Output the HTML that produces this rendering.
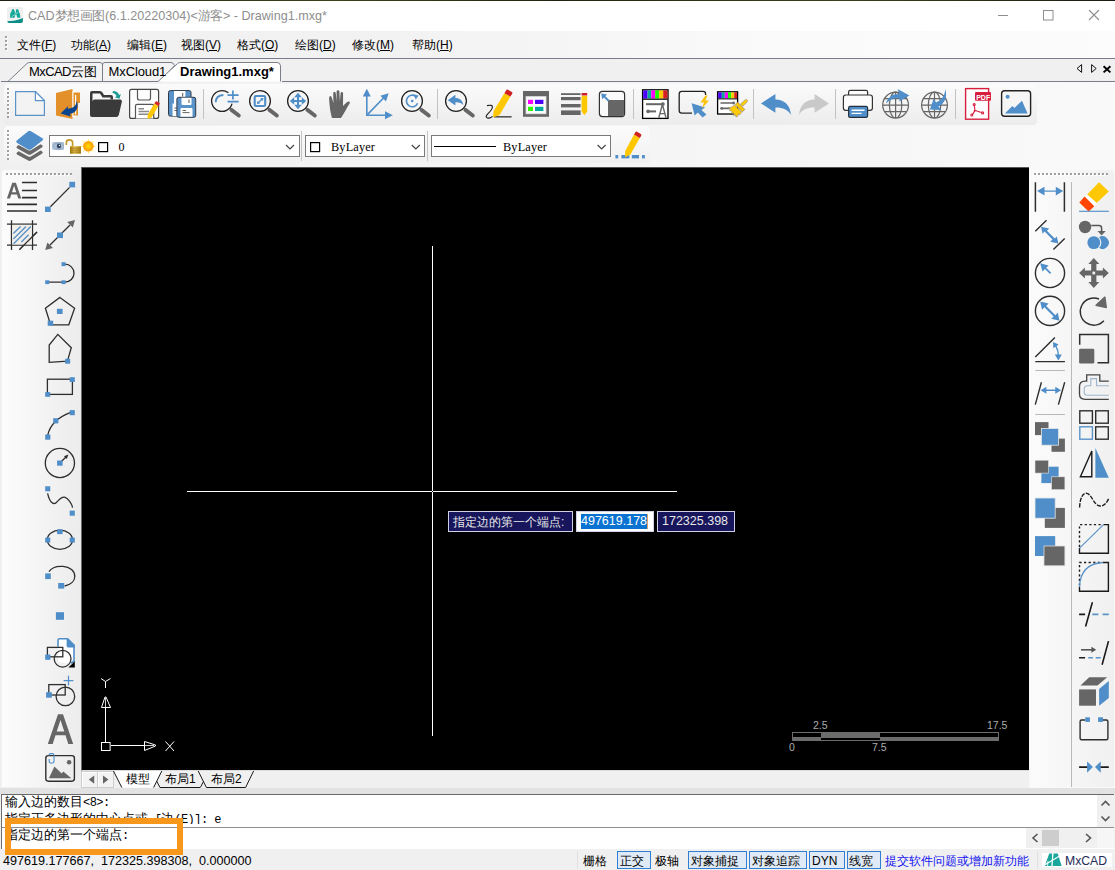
<!DOCTYPE html>
<html lang="zh">
<head>
<meta charset="utf-8">
<title>CAD</title>
<style>
*{box-sizing:border-box;margin:0;padding:0}
html,body{width:1115px;height:870px;overflow:hidden;background:#f0f0f0}
body{position:relative;font-family:"Liberation Sans",sans-serif;font-size:12px;color:#000}
.a{position:absolute}
.t{position:absolute;white-space:nowrap;line-height:1}
svg{position:absolute;overflow:visible}
.c{display:inline-block;width:1em;text-align:center}
u{text-decoration:underline;text-underline-offset:1px}
.grv{position:absolute;width:3px;background:repeating-linear-gradient(to bottom,#a0a0a0 0 2px,transparent 2px 4px) 0 0/2px 100% no-repeat,repeating-linear-gradient(to bottom,#fff 0 2px,transparent 2px 4px) 1px 1px/2px 100% no-repeat}
.grh{position:absolute;height:3px;background:repeating-linear-gradient(to right,#a0a0a0 0 2px,transparent 2px 4px) 0 0/100% 2px no-repeat,repeating-linear-gradient(to right,#fff 0 2px,transparent 2px 4px) 1px 1px/100% 2px no-repeat}
.sep{position:absolute;width:1px;background:#c4c4c4}
.combo{position:absolute;background:#fff;border:1px solid #7a7a7a}
.sb{position:absolute;border:1px solid #2f7fd5;background:#dfeaf6;height:18px;top:851px}
.mono{font-family:"Liberation Mono",monospace;font-size:12px;letter-spacing:-0.55px}
</style>
</head>
<body>
<!-- desktop strip -->
<div class="a" style="left:0;top:0;width:1115px;height:1px;background:linear-gradient(90deg,#1c2010,#3a4418 30%,#20240f 50%,#39421a 75%,#1a1d10)"></div>
<!-- title bar -->
<div class="a" style="left:0;top:1px;width:1115px;height:30px;background:#fff"></div>
<div class="t" id="title" style="left:28px;top:10px;font-size:12.6px;color:#8e8e8e;letter-spacing:0">CAD<span class="c">梦</span><span class="c">想</span><span class="c">画</span><span class="c">图</span>(6.1.20220304)&lt;<span class="c">游</span><span class="c">客</span>&gt; - Drawing1.mxg*</div>
<!-- menu bar -->
<div class="a" style="left:0;top:31px;width:1115px;height:27px;background:linear-gradient(90deg,#f0f0f0 0%,#f2f2f2 35%,#f9f9f9 65%,#fcfcfc 100%)"></div>
<div class="grv" style="left:5px;top:36px;height:16px"></div>
<div class="t m" style="left:17px;top:39px;font-size:12px"><span class="c">文</span><span class="c">件</span>(<u>F</u>)</div>
<div class="t m" style="left:71px;top:39px;font-size:12px"><span class="c">功</span><span class="c">能</span>(<u>A</u>)</div>
<div class="t m" style="left:127px;top:39px;font-size:12px"><span class="c">编</span><span class="c">辑</span>(<u>E</u>)</div>
<div class="t m" style="left:181px;top:39px;font-size:12px"><span class="c">视</span><span class="c">图</span>(<u>V</u>)</div>
<div class="t m" style="left:237px;top:39px;font-size:12px"><span class="c">格</span><span class="c">式</span>(<u>O</u>)</div>
<div class="t m" style="left:295px;top:39px;font-size:12px"><span class="c">绘</span><span class="c">图</span>(<u>D</u>)</div>
<div class="t m" style="left:352px;top:39px;font-size:12px"><span class="c">修</span><span class="c">改</span>(<u>M</u>)</div>
<div class="t m" style="left:412px;top:39px;font-size:12px"><span class="c">帮</span><span class="c">助</span>(<u>H</u>)</div>
<div class="a" style="left:0;top:58px;width:1115px;height:1px;background:#797d8b"></div>
<!-- tab bar -->
<svg style="left:0;top:59px" width="1115" height="25" viewBox="0 0 1115 25">
  <path d="M282 22.5 H1115" stroke="#797d8b" fill="none"/>
  <path d="M8 22.5 L27 4.5 Q28 3.5 30 3.5 H100 Q102.5 3.5 102.5 6 V22.5" fill="#f3f3f3" stroke="#7b8087" stroke-width="1"/>
  <path d="M102.5 22.5 V6 Q102.5 3.5 105 3.5 H171 Q173.5 3.5 174.5 6.5 L160 22.5" fill="#f3f3f3" stroke="#7b8087" stroke-width="1"/>
  <path d="M158 22.5 L177.5 4.6 Q178.6 3.5 180.5 3.5 H277 Q280.5 3.5 280.5 7 V22.5" fill="#fff" stroke="#7b8087" stroke-width="1"/>
  <path d="M1 22.5 H158" stroke="#797d8b" fill="none"/>
</svg>
<div class="t" style="left:29px;top:65px;font-size:13px;letter-spacing:-0.6px">MxCAD<span class="c">云</span><span class="c">图</span></div>
<div class="t" style="left:108.5px;top:65px;font-size:13px;letter-spacing:-0.1px">MxCloud1</div>
<div class="t" style="left:180px;top:65px;font-size:13px;font-weight:bold">Drawing1.mxg*</div>
<!-- title icon -->
<svg style="left:6px;top:6px" width="18" height="18" viewBox="6 6 18 18">
  <rect x="7" y="7" width="16" height="16" rx="1.8" fill="#f0f0f0"/>
  <path d="M10 17.6 Q10 12.6 11.4 11.8 Q11.6 9.2 13 9 Q14.6 9 14.8 12.6 L15.8 13.2 Q15.6 9.2 17 9 Q18.8 9.2 19 12 Q20.4 14 20.4 17.6 Q18.8 18 17.2 17.6 L16.4 14.6 L14.8 15.6 L14.8 17.6 Q12.4 18 10 17.6 Z" fill="#14a89a"/>
  <path d="M11.6 16.8 L17.8 12.4" stroke="#e8f4f2" stroke-width="0.6"/>
  <path d="M7.4 21 Q16 21 22.9 17.8 V21.2 Q22.9 23 21.2 23 H9 Q7.4 23 7.4 21 Z" fill="#0e8f86"/>
  <path d="M7.4 20.6 Q16 20.4 22.6 17.6" stroke="#fff" stroke-width="0.7" fill="none"/>
</svg>
<!-- window controls -->
<svg style="left:990px;top:5px" width="120" height="22" viewBox="990 5 120 22" fill="none" stroke="#8e8e8e" stroke-width="1">
  <path d="M998 15.5 H1008"/>
  <rect x="1043.5" y="10.5" width="9.5" height="9.5"/>
  <path d="M1089 10 L1099 20 M1099 10 L1089 20" stroke-width="1.1"/>
</svg>
<!-- tab bar arrows -->
<svg style="left:1070px;top:60px" width="45" height="20" viewBox="1070 60 45 20">
  <path d="M1081.6 64.6 V72.4 L1077 68.5 Z" fill="none" stroke="#111" stroke-width="1"/>
  <path d="M1091.6 64.6 V72.4 L1096.2 68.5 Z" fill="none" stroke="#111" stroke-width="1"/>
  <path d="M1103.6 66.2 L1110.4 72.4 M1110.4 66.2 L1103.6 72.4" stroke="#000" stroke-width="1.9"/>
</svg>
<!-- dock gradient -->
<div class="a" style="left:0;top:82px;width:1115px;height:706px;background:linear-gradient(90deg,#f0f0f0 0%,#f2f2f2 30%,#f6f6f6 65%,#f9f9f9 100%)"></div>
<!-- toolbar row 1 bg -->
<div class="a" style="left:4px;top:84px;width:1033px;height:41px;border-radius:4px;background:linear-gradient(#fbfbfb,#ececec)"></div>
<div class="grv" style="left:7px;top:88px;height:30px"></div>
<!-- toolbar row 2 bg -->
<div class="a" style="left:4px;top:126px;width:646px;height:37px;border-radius:4px;background:linear-gradient(#fbfbfb,#f1f1f1)"></div>
<div class="grv" style="left:7px;top:130px;height:30px"></div>
<!-- left toolbar bg -->
<div class="a" style="left:2px;top:170px;width:79px;height:617px;border-radius:4px 0 0 0;background:linear-gradient(90deg,#fcfcfc,#ececec)"></div>
<div class="grh" style="left:6px;top:173px;width:66px"></div>
<!-- right toolbar bg -->
<div class="a" style="left:1031px;top:170px;width:83px;height:617px;border-radius:3px 4px 0 0;background:linear-gradient(90deg,#fbfbfb,#f0f0f0)"></div>
<div class="grh" style="left:1034px;top:173px;width:74px"></div>
<div class="a" style="left:1071px;top:182px;width:1px;height:605px;background:#b9b9b9"></div>
<!-- canvas -->
<div class="a" style="left:81px;top:167px;width:947.5px;height:604px;background:#000;border:1px solid #6a6a6a;border-right:0;border-top-color:#555;border-bottom-color:#dcdcdc"></div>
<!-- crosshair -->
<div class="a" style="left:432px;top:246px;width:1px;height:490px;background:#fff"></div>
<div class="a" style="left:187px;top:491px;width:490px;height:1px;background:#fff"></div>
<div class="a" style="left:432px;top:491px;width:1px;height:1px;background:#000"></div>
<!-- dyn input -->
<div class="a" style="left:448px;top:511px;width:125px;height:21px;background:#17155c;border:1px solid #cfcfe6"></div>
<div class="t" style="left:453px;top:516px;font-size:12px;color:#e6e6e6"><span class="c">指</span><span class="c">定</span><span class="c">边</span><span class="c">的</span><span class="c">第</span><span class="c">一</span><span class="c">个</span><span class="c">端</span><span class="c">点</span>:</div>
<div class="a" style="left:576px;top:511px;width:78px;height:21px;background:#fff;border:1px solid #cfcfe6"></div>
<div class="a" style="left:581px;top:514px;width:66px;height:15px;background:#0a73d1"></div>
<div class="a" style="left:647px;top:514px;width:1px;height:15px;background:#e0a060"></div>
<div class="t" style="left:581px;top:515px;font-size:12.5px;color:#fff">497619.178</div>
<div class="a" style="left:657px;top:511px;width:78px;height:21px;background:#17155c;border:1px solid #cfcfe6"></div>
<div class="t" style="left:662px;top:515px;font-size:12.5px;color:#e6e6e6">172325.398</div>
<!-- UCS icon -->
<svg style="left:90px;top:670px" width="100" height="90" viewBox="0 0 100 90" fill="none" stroke="#fff" stroke-width="1">
  <rect x="11.5" y="72.5" width="8.6" height="8"/>
  <path d="M15.5 72 V38"/>
  <path d="M11.5 37.5 H20.5 L16 27 L15 27 Z"/>
  <path d="M15.5 37 V28" stroke="#ccc"/>
  <path d="M11 8.5 L15.5 11.5 L20.5 8.5 M15.5 11.5 V18"/>
  <path d="M21 75.5 H54"/>
  <path d="M54.5 71.5 V80.5 L65.5 76 L65.5 75 Z"/>
  <path d="M55 75.5 H64" stroke="#ccc"/>
  <path d="M75.5 71.5 L84 81 M84 71.5 L75.5 81"/>
</svg>
<!-- scale bar -->
<div class="a" style="left:792px;top:732px;width:207px;height:9px;background:#000;border:1px solid #6c6c6c"></div>
<div class="a" style="left:792px;top:736.5px;width:29px;height:4.5px;background:#6c6c6c"></div>
<div class="a" style="left:821px;top:732px;width:59px;height:4.5px;background:#6c6c6c"></div>
<div class="a" style="left:880px;top:736.5px;width:119px;height:4.5px;background:#6c6c6c"></div>
<div class="a" style="left:821px;top:736.5px;width:59px;height:1px;background:#6c6c6c"></div>
<div class="t" style="left:813px;top:720px;font-size:10.5px;color:#adadad">2.5</div>
<div class="t" style="left:987px;top:720px;font-size:10.5px;color:#adadad">17.5</div>
<div class="t" style="left:789px;top:742px;font-size:10.5px;color:#adadad">0</div>
<div class="t" style="left:872px;top:742px;font-size:10.5px;color:#adadad">7.5</div>
<!-- layout tabs -->
<div class="a" style="left:81px;top:771px;width:948px;height:17px;background:#f0f0f0"></div>
<div class="a" style="left:81px;top:771px;width:17px;height:17px;border:1px solid #cdcdcd;background:#f3f3f3;box-shadow:inset 1px 1px 0 #fff"></div>
<div class="a" style="left:97px;top:771px;width:17px;height:17px;border:1px solid #cdcdcd;background:#f3f3f3;box-shadow:inset 1px 1px 0 #fff"></div>
<svg style="left:80px;top:770px" width="200" height="20" viewBox="80 770 200 20">
  <path d="M113.5 771 L121.8 787.5 H153.6 L161.8 771 Z" fill="#fff"/>
  <path d="M94.2 775.4 V783.8 L88.8 779.6 Z M103 775.4 V783.8 L108.4 779.6 Z" fill="#666"/>
  <path d="M113.5 771 L121.8 787.5 M153.6 787.5 L161.8 771 M156.6 781 L160 787.5 H200 M198.2 771 L206.4 787.5 H245.6 L253.6 771 M203.4 781.6 L200.4 787.5" stroke="#1a1a1a" stroke-width="1" fill="none"/>
</svg>
<div class="t" style="left:126px;top:773px;font-size:12px"><span class="c">模</span><span class="c">型</span></div>
<div class="t" style="left:165px;top:773px;font-size:12px"><span class="c">布</span><span class="c">局</span>1</div>
<div class="t" style="left:211px;top:773px;font-size:12px"><span class="c">布</span><span class="c">局</span>2</div>
<!-- band -->
<div class="a" style="left:0;top:788px;width:1115px;height:6px;background:#e2e2e2"></div>
<!-- command area -->
<div class="a" style="left:1px;top:794px;width:1113px;height:55px;background:#fff;border-top:1px solid #696969;border-left:1.5px solid #6d6d6d"></div>
<div class="a" style="left:2px;top:795px;width:1095px;height:29px;overflow:hidden">
  <div class="t cmd" style="left:3px;top:0px;font-size:13px;letter-spacing:0.1px"><span class="c">输</span><span class="c">入</span><span class="c">边</span><span class="c">的</span><span class="c">数</span><span class="c">目</span><span class="mono">&lt;8&gt;:</span></div>
  <div class="t cmd" style="left:3px;top:16.5px;font-size:13px;letter-spacing:0.1px"><span class="c">指</span><span class="c">定</span><span class="c">正</span><span class="c">多</span><span class="c">边</span><span class="c">形</span><span class="c">的</span><span class="c">中</span><span class="c">心</span><span class="c">点</span><span class="c">或</span><span class="mono"> [</span><span class="c">边</span><span class="mono">(E)]: e</span></div>
</div>
<div class="a" style="left:2px;top:827px;width:1112px;height:1px;background:#8f8f8f"></div>
<div class="t cmd" style="left:5px;top:828px;font-size:13px;letter-spacing:0.1px"><span class="c">指</span><span class="c">定</span><span class="c">边</span><span class="c">的</span><span class="c">第</span><span class="c">一</span><span class="c">个</span><span class="c">端</span><span class="c">点</span><span class="mono">:</span></div>
<!-- v scrollbar -->
<div class="a" style="left:1097px;top:795px;width:17px;height:32px;background:#f0f0f0"></div>
<svg style="left:1097px;top:795px" width="17" height="32" viewBox="0 0 17 32" fill="none" stroke="#555" stroke-width="1.6">
  <path d="M4.5 10.5 L8.5 6.5 L12.5 10.5"/>
  <path d="M4.5 21.5 L8.5 25.5 L12.5 21.5"/>
</svg>
<!-- h scrollbar -->
<div class="a" style="left:1026px;top:828px;width:71px;height:20px;background:#f0f0f0"></div>
<div class="a" style="left:1042px;top:830px;width:17px;height:16px;background:#cdcdcd"></div>
<svg style="left:1026px;top:828px" width="71" height="20" viewBox="0 0 71 20" fill="none" stroke="#555" stroke-width="1.6">
  <path d="M11.5 6 L7 10 L11.5 14"/>
  <path d="M60 6 L64.5 10 L60 14"/>
</svg>
<div class="a" style="left:1097px;top:828px;width:17px;height:20px;background:#f6f6f6"></div>
<!-- status bar -->
<div class="a" style="left:0;top:849px;width:1115px;height:21px;background:#f0f0f0"></div>
<div class="t" style="left:3px;top:855px;font-size:12.6px">497619.177667,&nbsp; 172325.398308,&nbsp; 0.000000</div>
<div class="a" style="left:577px;top:851px;width:1px;height:18px;background:#e0e0e0"></div>
<div class="t" style="left:583px;top:855px;font-size:12px"><span class="c">栅</span><span class="c">格</span></div>
<div class="sb" style="left:617px;width:34px"></div>
<div class="t" style="left:620px;top:855px;font-size:12px"><span class="c">正</span><span class="c">交</span></div>
<div class="t" style="left:655px;top:855px;font-size:12px"><span class="c">极</span><span class="c">轴</span></div>
<div class="sb" style="left:688px;width:59px"></div>
<div class="t" style="left:691px;top:855px;font-size:12px"><span class="c">对</span><span class="c">象</span><span class="c">捕</span><span class="c">捉</span></div>
<div class="sb" style="left:749px;width:58px"></div>
<div class="t" style="left:752px;top:855px;font-size:12px"><span class="c">对</span><span class="c">象</span><span class="c">追</span><span class="c">踪</span></div>
<div class="sb" style="left:809px;width:36px"></div>
<div class="t" style="left:812px;top:855px;font-size:12px">DYN</div>
<div class="sb" style="left:847px;width:34px"></div>
<div class="t" style="left:849px;top:855px;font-size:12px"><span class="c">线</span><span class="c">宽</span></div>
<div class="t" style="left:885px;top:855px;font-size:12px;color:#1414f0"><span class="c">提</span><span class="c">交</span><span class="c">软</span><span class="c">件</span><span class="c">问</span><span class="c">题</span><span class="c">或</span><span class="c">增</span><span class="c">加</span><span class="c">新</span><span class="c">功</span><span class="c">能</span></div>
<div class="a" style="left:1037px;top:851px;width:1px;height:18px;background:#e0e0e0"></div>
<div class="a" style="left:1042px;top:853px;width:70px;height:14px;background:#fff"></div>
<svg style="left:1044px;top:853px" width="20" height="14" viewBox="0 0 20 14">
  <path d="M5.2 0.5 H8.2 L7.5 13 H0.8 Z" fill="#1aa79b"/>
  <path d="M9.5 0.5 H13.8 L17.6 13 H8.2 Z" fill="#1aa79b"/>
  <path d="M0.5 12 L16 2.8" stroke="#fff" stroke-width="1.1"/>
  <path d="M8.8 1 L8.2 13" stroke="#fff" stroke-width="0.9"/>
  <path d="M4 8 L3.5 13" stroke="#fff" stroke-width="0.8"/>
</svg>
<div class="t" style="left:1065px;top:855px;font-size:12.2px;color:#1f2b58">MxCAD</div>
<!-- orange annotation -->
<div class="a" style="left:5px;top:818px;width:178px;height:36.5px;border:6px solid #f7981d"></div>
<!-- toolbar row 1 icons (page coords) -->
<svg style="left:0;top:0" width="1115" height="130" viewBox="0 0 1115 130">
<g stroke="#c2c2c2" stroke-width="1" fill="none">
  <path d="M203.5 89 V119 M437.5 89 V119 M633.5 89 V119 M753.5 89 V119 M835.5 89 V119 M955.5 89 V119"/>
</g>
<!-- new -->
<path d="M15.6 91.6 H35.4 L44.4 100.6 V115.4 H15.6 Z" fill="#f3f3f3" stroke="#5b93c9" stroke-width="1.2"/>
<path d="M35.4 91.6 V100.6 H44.4 Z" fill="#fff" stroke="#5b93c9" stroke-width="1.2" stroke-linejoin="round"/>
<!-- open orange -->
<path d="M56 93 L72.5 89 V119 L56 115.5 Z" fill="#e3902b"/>
<path d="M72.5 91.5 H76 V117 H72.5 Z" fill="#fff"/>
<path d="M73.5 92.5 H80 V103 H78 V115.5 H73.5 Z" fill="#e3902b"/>
<path d="M75 95 H76.2 V114.5 H75 Z" fill="#fff"/>
<path d="M76.6 100.6 C76.6 106 73 108.6 67.6 108.8 L68.2 106 L60.6 113.6 L70.6 116.6 L70 113.8 C76.4 113.4 79.4 107 76.6 100.6 Z" fill="#0b4590"/>
<!-- folder -->
<path d="M90 93 Q90 91 92 91 H100 Q101.5 91 102.5 92.5 L104 95 H111 Q113 95 113 97 V99.5 H110.5 V97.5 H102.5 L100 93.5 H92.5 V104 L90 110 Z" fill="#3a3a3a"/>
<path d="M94.5 99.5 H120 Q122.3 99.5 121.8 102 L118.8 115 Q118.3 117 116.3 117 H92 Q90 117 90 115 V108 L92.3 101 Q92.8 99.5 94.5 99.5 Z" fill="#3a3a3a"/>
<path d="M113 91 C116 91 118.5 92.5 119 95 L120.8 94 L119.5 98.7 L114.8 97.2 L116.6 96.2 C116 94.2 114.5 93.2 112.5 93 Z" fill="#199a92"/>
<!-- save -->
<rect x="129.6" y="89.4" width="29" height="29" rx="2" fill="#fdfdfd" stroke="#444" stroke-width="1.2"/>
<path d="M137.5 89.5 V98 Q137.5 100 139.5 100 H148.5 Q150.5 100 150.5 98 V89.5" fill="none" stroke="#555" stroke-width="1.2"/>
<path d="M135.5 118.4 V106 Q135.5 104.3 137.2 104.3 H152 Q153.7 104.3 153.7 106 V118.4" fill="#fff" stroke="#555" stroke-width="1.2"/>
<path d="M138.5 108.8 H144 M138.5 111.5 H149 M138.5 114.2 H149" stroke="#888" stroke-width="1.4"/>
<path d="M154.4 103.6 L158.4 106 L151.6 117.4 L147.5 118.9 L147.8 114.6 Z" fill="#fbc707"/>
<path d="M154.4 103.6 L155.6 101.6 Q156.1 100.9 157 101.4 L159.5 102.9 Q160.1 103.4 159.7 104.1 L158.4 106 Z" fill="#d62626"/>
<!-- save all -->
<rect x="168.5" y="90.6" width="22.5" height="25.5" rx="1.8" fill="#5a93c9" stroke="#2f3a46" stroke-width="1"/>
<path d="M174 91 H185.4 V104 H174 Z" fill="#fff"/>
<path d="M182.7 93 V96.5" stroke="#555" stroke-width="1"/>
<path d="M172.5 103.5 H177 V116 H172.5 Z" fill="#fff"/>
<path d="M174.5 108 H177 M174.5 110.5 H177" stroke="#666" stroke-width="1"/>
<rect x="176.9" y="97.3" width="18.8" height="20" rx="1.8" fill="#5a93c9" stroke="#2f3a46" stroke-width="1"/>
<path d="M181.5 97.8 H191.5 V104 Q191.5 105 190.5 105 H182.5 Q181.5 105 181.5 104 Z" fill="#fff"/>
<path d="M189 99.5 V103" stroke="#555" stroke-width="1"/>
<path d="M180.5 116.8 V109 Q180.5 108 181.5 108 H191.5 Q192.5 108 192.5 109 V116.8 Z" fill="#fff"/>
<path d="M182.5 110.5 H186 M182.5 112.6 H189.5" stroke="#666" stroke-width="1"/>
<!-- magnifiers -->
<g fill="none" stroke="#666" stroke-width="3.9" stroke-linecap="round">
  <path d="M231.4 109.9 L238.8 115.5"/>
  <path d="M269.4 109.9 L276.8 115.5"/>
  <path d="M307.4 109.9 L314.8 115.5"/>
  <path d="M421.4 109.9 L428.8 115.5"/>
  <path d="M465.4 109.9 L472.8 115.5"/>
</g>
<g stroke="#222" stroke-width="1.3" fill="#f6f6f6">
  <circle cx="260" cy="101" r="10.4"/>
  <circle cx="298" cy="101" r="10.4"/>
  <circle cx="412" cy="101" r="10.4"/>
  <circle cx="456" cy="101" r="10.4"/>
</g>
<circle cx="222" cy="101" r="10.4" fill="#f6f6f6"/>
<path d="M232.05 103.7 A10.4 10.4 0 1 1 228.4 92.8" fill="none" stroke="#222" stroke-width="1.3"/>
<!-- zoom+- -->
<g fill="none" stroke="#4f8ec8" stroke-width="1.7">
  <path d="M215.7 102.2 Q215.9 95.4 223.4 95" stroke-width="1.8"/>
  <path d="M232.9 90.4 V99.5 M227.5 95.1 H238.6 M227.5 101.7 H238.6"/>
</g>
<!-- zoom window -->
<rect x="254.7" y="96" width="10.5" height="10" rx="1.2" fill="#f6f6f6" stroke="#4f8ec8" stroke-width="2.1"/>
<path d="M258 103 L262.4 98.8" fill="none" stroke="#4f8ec8" stroke-width="1.3"/><path d="M263.4 97.9 L263 101 L260.3 98.3 Z M257 104 L257.4 100.9 L260.1 103.6 Z" fill="#4f8ec8"/>
<!-- zoom pan -->
<g fill="#4f8ec8" stroke="none">
  <path d="M298 92.8 L301.8 97.2 H299 V100 H301.8 V97.2 L306.2 101 L301.8 104.8 V102 H299 V104.8 H301.8 L298 109.2 L294.2 104.8 H297 V102 H294.2 V104.8 L289.8 101 L294.2 97.2 V100 H297 V97.2 H294.2 Z"/>
</g>
<!-- hand -->
<path d="M332 118 C331 114 330 110 329.6 105 C329.2 101 329 98 329.4 96.8 C330 95.6 331.2 96 331.6 97.2 L333.4 103 L333.2 93.5 C333.2 91.6 335.6 91.6 335.8 93.5 L336.6 101.5 L336.6 91.8 C336.6 89.8 339.4 89.8 339.4 91.8 L339.8 101.5 L340.6 93.2 C340.8 91.4 343.2 91.6 343.1 93.5 L343 106 C344.5 104.5 346.5 102 348.3 101.5 C349.8 101.2 350.4 102.4 349.6 103.6 C347 107.5 345 112 341 118 Z" fill="#666"/>
<!-- axes -->
<g fill="none" stroke="#4f8ec8" stroke-width="1.6">
  <path d="M366.8 95 V115.2 H387"/>
  <path d="M367.4 114.6 L384.5 97"/>
</g>
<g fill="#4f8ec8">
  <path d="M366.8 88.8 L370.8 96.6 H362.8 Z"/>
  <path d="M392.8 115.2 L385 119.2 V111.2 Z"/>
  <path d="M388.6 93.2 L386 101.4 L380.4 95.8 Z"/>
</g>
<!-- zoom C -->
<g fill="none" stroke="#4f8ec8" stroke-width="1.6">
  <path d="M417.6 103.2 A5.8 5.8 0 1 1 415.8 96.4"/>
</g>
<path d="M413.8 94.6 L418.6 95.6 L415.6 99.4 Z" fill="#4f8ec8"/>
<circle cx="412.2" cy="101" r="1.3" fill="#4f8ec8"/>
<!-- zoom prev -->
<path d="M447.8 100.2 L455.4 94.8 V98 C459.5 98 462.6 100.4 463.4 105.2 C461.4 102.6 458.8 102 455.4 102.2 V105.6 Z" fill="#4f8ec8"/>
<!-- pencil -->
<path d="M487 105.6 Q492.6 104.4 492.4 107 Q492 110 488 113.6 Q484.6 117 487.4 118 Q490 118.6 492.6 116.4" fill="none" stroke="#1a1a1a" stroke-width="1.1"/>
<path d="M494 116.8 H511.6" stroke="#555" stroke-width="1.6"/>
<path d="M504.4 93.2 L510.4 96.6 L499.6 115 L493 117.4 L493.6 111 Z" fill="#fdc802"/>
<path d="M504.4 93.2 L506.2 90.2 Q506.8 89.2 507.9 89.8 L511.8 92 Q512.8 92.7 512.2 93.7 L510.4 96.6 Z" fill="#d01f1f"/>
<!-- layout -->
<rect x="523" y="91" width="26" height="25.8" fill="#666"/>
<rect x="526" y="96.6" width="20" height="17.2" fill="#fbfbfb" stroke="#ddd" stroke-width="0.8"/>
<rect x="528" y="99.8" width="5" height="4.2" fill="#ff00ff"/>
<rect x="535" y="99.8" width="8.4" height="4.2" fill="#4a00ff"/>
<rect x="528" y="106.8" width="5" height="4.2" fill="#2bff00"/>
<rect x="535" y="106.8" width="8.4" height="4.2" fill="#00a99d"/>
<!-- lines pencil -->
<g fill="#666">
  <rect x="561" y="93.2" width="19.6" height="1.8"/>
  <rect x="561" y="97" width="19.6" height="3.2"/>
  <rect x="561" y="104" width="19.6" height="3.4"/>
  <rect x="561" y="110.4" width="19.6" height="4.6"/>
</g>
<path d="M581.6 96 H587.2 V111.5 L584.4 115.2 L581.6 111.5 Z" fill="#fdc802"/>
<path d="M581.6 93.6 Q581.6 93 582.2 93 H586.6 Q587.2 93 587.2 93.6 V95.6 H581.6 Z" fill="#d01f1f"/>
<!-- rect corner -->
<rect x="599.4" y="91.4" width="25.2" height="25.2" rx="3" fill="#fafafa" stroke="#333" stroke-width="1.2"/>
<path d="M608 100 H624 V113.8 Q624 116 621.8 116 H608 Z" fill="#666"/>
<path d="M608.6 100.8 L603.4 95.6" stroke="#4f8ec8" stroke-width="2"/>
<path d="M601.2 93.4 L607 94.4 L602.2 99.2 Z" fill="#4f8ec8"/>
<!-- colorbar A -->
<rect x="642.6" y="89.8" width="25.4" height="28.6" fill="#fff" stroke="#000" stroke-width="1.3"/>
<g>
  <rect x="643.2" y="90.4" width="4.4" height="8.2" fill="#4a00ff"/>
  <rect x="647.6" y="90.4" width="3.6" height="8.2" fill="#0aa89c"/>
  <rect x="651.2" y="90.4" width="4" height="8.2" fill="#ff00ff"/>
  <rect x="655.2" y="90.4" width="4" height="8.2" fill="#1eff00"/>
  <rect x="659.2" y="90.4" width="4" height="8.2" fill="#ffc800"/>
  <rect x="663.2" y="90.4" width="4.2" height="8.2" fill="#d81e1e"/>
  <path d="M643 99.2 H667.6" stroke="#000" stroke-width="1.2"/>
</g>
<g stroke="#666" fill="none">
  <path d="M646 104.2 H664" stroke-width="2"/>
  <path d="M648 111.4 H656" stroke-width="2"/>
  <path d="M658.8 117.8 L662.4 104.4 L666 117.8 M660 113.6 H664.8" stroke-width="1.4"/>
</g>
<circle cx="663" cy="104" r="1.8" fill="#666"/>
<circle cx="648" cy="111.4" r="1.8" fill="#666"/>
<!-- select -->
<path d="M705.6 95 V94 Q705.6 91.4 703 91.4 H681.8 Q679.2 91.4 679.2 94 V110.6 Q679.2 113.2 681.8 113.2 H692" fill="none" stroke="#222" stroke-width="1.3"/>
<path d="M691.6 103.2 L705.2 107.6 L701.4 110 L706.4 114.6 L702.6 117.4 L697.8 112.6 L694.6 115.6 Z" fill="#4f8ec8"/>
<path d="M705.4 95.6 L700.4 102.4 L704 102.6 L702 108.4 L709 100.6 L705.4 100.4 L707.6 95.6 Z" fill="#fbc20a"/>
<!-- colorbar brush -->
<rect x="717.6" y="91.8" width="20" height="22.2" fill="#fff" stroke="#000" stroke-width="1.3"/>
<g>
  <rect x="718.2" y="92.4" width="3.6" height="6" fill="#4a00ff"/>
  <rect x="721.8" y="92.4" width="3" height="6" fill="#0aa89c"/>
  <rect x="724.8" y="92.4" width="3.2" height="6" fill="#ff00ff"/>
  <rect x="728" y="92.4" width="3.2" height="6" fill="#1eff00"/>
  <rect x="731.2" y="92.4" width="3" height="6" fill="#ffc800"/>
  <rect x="734.2" y="92.4" width="2.8" height="6" fill="#d81e1e"/>
</g>
<path d="M718 98.9 H737.4" stroke="#000" stroke-width="1"/>
<path d="M720.5 103 H734 M722 108.4 H730" stroke="#666" stroke-width="1.6"/>
<circle cx="733.6" cy="103" r="1.4" fill="#666"/><circle cx="721.6" cy="108.4" r="1.4" fill="#666"/>
<g fill="#ffcb05" stroke="#6b6f96" stroke-width="0.45" stroke-linejoin="round">
<path d="M745.4 99.7 Q746.7 99.1 747.3 100.3 Q747.7 101.4 746.8 102.3 L742.7 106.3 L740.4 104 Z"/>
<path d="M734.6 105 L741.8 112.4 L739.7 114.8 L738.6 113.8 L737.7 116.3 L735.9 116.9 L735.4 114.7 L733.8 115.7 L733.6 113.1 L731.6 113.5 L731.8 111.1 L729.4 110.7 L730.6 109.1 L727.9 108 Q731.8 107.8 734.6 105 Z"/>
<path d="M735 104.6 L737.6 102 L744.9 109.4 L742.3 112 Z" fill="#f8c400"/>
</g>
<!-- undo / redo -->
<path id="undo" d="M761 103.4 L775.4 94 V99.6 C784 99.6 790 104.6 791 115 C787.6 109.4 782.4 107.4 775.4 107.6 V112.8 Z" fill="#4f8ec8"/>
<path d="M829 103.4 L814.6 94 V99.6 C806 99.6 800 104.6 799 115 C802.4 109.4 807.6 107.4 814.6 107.6 V112.8 Z" fill="#c9c9c9"/>
<!-- printer -->
<rect x="848.6" y="90.4" width="19" height="7" rx="1.6" fill="#fdfdfd" stroke="#333" stroke-width="1.2"/>
<rect x="843.4" y="95" width="29" height="15.4" rx="2.4" fill="#fdfdfd" stroke="#333" stroke-width="1.2"/>
<rect x="848.6" y="106.4" width="19" height="11" rx="1.6" fill="#4f8ec8" stroke="#26303c" stroke-width="1.2"/>
<path d="M851.6 110.2 H864.6 M851.6 113.4 H861.6" stroke="#fff" stroke-width="1.4"/>
<!-- globes -->
<g fill="none" stroke="#666" stroke-width="1.2" transform="translate(0 0)">
  <circle cx="895.6" cy="105.1" r="12.9"/>
  <ellipse cx="895.6" cy="105.1" rx="6.2" ry="12.9"/>
  <path d="M895.6 92.2 V118 M882.7 105.1 H908.5 M884.6 98.6 H906.6 M884.6 111.6 H906.6"/>
</g>
<g fill="none" stroke="#666" stroke-width="1.2" transform="translate(38.9 0)">
  <circle cx="895.6" cy="105.1" r="12.9"/>
  <ellipse cx="895.6" cy="105.1" rx="6.2" ry="12.9"/>
  <path d="M895.6 92.2 V118 M882.7 105.1 H908.5 M884.6 98.6 H906.6 M884.6 111.6 H906.6"/>
</g>
<path d="M886 103.4 C888 96.6 893.4 93.4 899.4 94 L897.6 89 L909.4 95.4 L899.2 101.4 L899.8 98.4 C895 97.6 890 99.4 886 103.4 Z" fill="#4f8ec8"/>
<path d="M945.2 89 C948 97 944 104.4 938.4 106.4 L941.6 110 L930 109.4 L933.6 98.8 L936 102.4 C941.4 100.4 945 96 945.2 89 Z" fill="#4f8ec8"/>
<!-- pdf -->
<rect x="965.6" y="88.6" width="23" height="30.6" fill="#fff" stroke="#d81e3f" stroke-width="1.4"/>
<rect x="975" y="92" width="16" height="8.8" rx="1" fill="#d81e3f"/>
<text x="976.2" y="99.6" font-family="Liberation Sans, sans-serif" font-weight="bold" font-size="7.6" fill="#fff" textLength="14" lengthAdjust="spacingAndGlyphs">PDF</text>
<g fill="none" stroke="#d81e3f" stroke-width="1.1">
  <path d="M974.2 105.4 Q975.8 110 973 113.8 M975.6 110.4 Q979.4 111.6 981.6 112.6 M975.6 110.4 Q973.4 112.8 972.4 114.2"/>
  <circle cx="974.2" cy="104.6" r="1"/><circle cx="982.6" cy="112.9" r="1"/><circle cx="971.8" cy="115" r="1"/>
</g>
<!-- image -->
<rect x="1001.6" y="90.8" width="29" height="25.4" rx="3" fill="#f5f5f5" stroke="#222" stroke-width="1.4"/>
<circle cx="1007.6" cy="96.8" r="2" fill="#4f8ec8"/>
<path d="M1004.8 113.4 L1012.4 106 L1014.4 108 L1022 100.8 L1027.6 113.4 Z" fill="#4f8ec8"/>
</svg>
<!-- toolbar row 2 -->
<div class="sep" style="left:301px;top:131px;height:30px"></div>
<div class="sep" style="left:427px;top:131px;height:30px"></div>
<div class="combo" style="left:49px;top:135px;width:251px;height:22px"></div>
<div class="combo" style="left:305px;top:135px;width:120px;height:22px"></div>
<div class="combo" style="left:431px;top:135px;width:180px;height:22px"></div>
<div class="t" style="left:118.5px;top:141px;font-family:'Liberation Serif',serif;font-size:12px">0</div>
<div class="t ser" style="left:331px;top:141px;font-family:'Liberation Serif',serif;font-size:12.3px;letter-spacing:0.15px">ByLayer</div>
<div class="t ser" style="left:503px;top:141px;font-family:'Liberation Serif',serif;font-size:12.3px;letter-spacing:0.15px">ByLayer</div>
<svg style="left:0;top:126px" width="660" height="40" viewBox="0 126 660 40">
<defs>
  <radialGradient id="sun" cx="50%" cy="50%" r="50%"><stop offset="0" stop-color="#ffe000"/><stop offset="0.55" stop-color="#ffb400"/><stop offset="1" stop-color="#ff9800"/></radialGradient>
  <linearGradient id="gold" x1="0" x2="1"><stop offset="0" stop-color="#a87a10"/><stop offset="0.4" stop-color="#e6c050"/><stop offset="1" stop-color="#b08214"/></linearGradient>
  <radialGradient id="eye" cx="55%" cy="50%" r="60%"><stop offset="0" stop-color="#3e5878"/><stop offset="0.5" stop-color="#7895b4"/><stop offset="1" stop-color="#c5d3e2"/></radialGradient>
</defs>
<!-- layers -->
<path d="M17 154.4 L28.2 160.6 Q29.6 161.4 31 160.6 L42.2 153.4 Q43.4 152.4 42.2 151.4 L40.6 150.4 L31 156.4 Q29.6 157.2 28.2 156.4 L18.6 151.2 L17 152.4 Q15.8 153.4 17 154.4 Z" fill="#686868"/>
<path d="M17 148.2 L28.2 154.4 Q29.6 155.2 31 154.4 L42.2 147.2 Q43.4 146.2 42.2 145.2 L40.6 144.2 L31 150.2 Q29.6 151 28.2 150.2 L18.6 145 L17 146.2 Q15.8 147.2 17 148.2 Z" fill="#686868"/>
<path d="M16.8 142.8 L28.2 149.4 Q29.6 150.2 31 149.4 L42.4 140.4 Q43.8 139.2 42.4 138.2 L31 131.2 Q29.6 130.4 28.2 131.2 L16.8 140.6 Q15.6 141.8 16.8 142.8 Z" fill="#4f8ec8"/>
<!-- eye -->
<rect x="52" y="142" width="12" height="8" fill="url(#eye)"/>
<ellipse cx="58.6" cy="146" rx="4.6" ry="2.6" fill="#dfe7f0" opacity="0.55"/>
<circle cx="59" cy="146" r="2.2" fill="#2f4666"/>
<circle cx="59.6" cy="145.4" r="0.7" fill="#fff"/>
<!-- lock -->
<path d="M66.4 145 V142.4 Q66.4 139.8 69.4 139.8 Q72.6 139.8 72.6 142.6 V146.4" fill="none" stroke="#c39a2a" stroke-width="1.7"/>
<rect x="70" y="146.2" width="11" height="7.6" fill="url(#gold)"/>
<path d="M70 148.2 H81 M70 150.2 H81 M70 152.2 H81" stroke="#8f6a0e" stroke-width="0.6"/>
<!-- sun -->
<g fill="#ffe600"><circle cx="88.4" cy="139.8" r="0.6"/><circle cx="88.4" cy="152.6" r="0.6"/><circle cx="82" cy="146.2" r="0.6"/><circle cx="94.8" cy="146.2" r="0.6"/><circle cx="83.8" cy="141.6" r="0.6"/><circle cx="93" cy="141.6" r="0.6"/><circle cx="83.8" cy="150.8" r="0.6"/><circle cx="93" cy="150.8" r="0.6"/></g>
<circle cx="88.4" cy="146.2" r="5.3" fill="url(#sun)"/>
<!-- squares -->
<rect x="98.6" y="142.6" width="9" height="9" fill="#fff" stroke="#000" stroke-width="1.2"/>
<rect x="310.6" y="142.6" width="9" height="9" fill="#fff" stroke="#000" stroke-width="1.2"/>
<!-- chevrons -->
<g fill="none" stroke="#444" stroke-width="1.2">
  <path d="M286 145 L290 149 L294 145"/>
  <path d="M411.8 145 L415.8 149 L419.8 145"/>
  <path d="M597.6 145 L601.6 149 L605.6 145"/>
</g>
<path d="M434 146.5 H496" stroke="#000" stroke-width="1"/>
<!-- pencil -->
<g fill="#4f8ec8"><rect x="615.4" y="155" width="2.8" height="3.4"/><rect x="621.4" y="155" width="8" height="3.4"/><rect x="631.8" y="155" width="7.2" height="3.4"/><rect x="642" y="155" width="2.8" height="3.4"/></g>
<path d="M634 134.6 L639.8 138 L630.4 154.4 L625 157.2 L625.2 151 Z" fill="#fdc802"/>
<path d="M634 134.6 L635.4 132.2 Q636 131.2 637 131.8 L640.8 134 Q641.8 134.7 641.2 135.7 L639.8 138 Z" fill="#d01f1f"/>
</svg>
<!-- left toolbar icons (page coords) -->
<svg style="left:0;top:170px" width="82" height="620" viewBox="0 170 82 620">
<path d="M58 662 V640.4 Q58 638.8 59.6 638.8 H67.6 L74 645.4 V661 L70 664 Z" fill="#fff" stroke="none"/>
<path d="M58 646.8 V640.4 Q58 638.8 59.6 638.8 H67.6 L74 645.4 V661 L70.8 663.4" fill="none" stroke="#4f8ec8" stroke-width="1.6"/>
<path d="M66.6 638.4 H68 L74.8 645 V647.4 H68.2 Q66.6 647.4 66.6 645.8 Z" fill="#4f8ec8"/>
<g id="L" fill="none" stroke="#2e2e2e" stroke-width="1.3">
<!-- A lines -->
<path d="M22 182.5 H37 M22 190.5 H37 M22 197.6 H37 M7 204.4 H37 M7 211 H37" stroke-width="1.6"/>
<!-- line -->
<path d="M50.4 206.8 L69.6 187.4"/>
<!-- hatch -->
<path d="M11.5 220.2 V250 M32.5 220.2 V250 M7 224.2 H37 M7 245.2 H37 M19.4 249.6 L37 232"/>
<!-- double arrow -->
<path d="M50 245 L70 225"/>
<!-- polyline -->
<path d="M49 282.2 H62 M65 264.2 A9 9 0 0 1 65 282.2"/>
<!-- pentagon -->
<path d="M59.9 297.4 L74.6 308.2 L68.8 324.8 H50.6 L45.4 308.2 Z"/>
<!-- polygon -->
<path d="M57.8 334.4 L71.3 347.8 L67.4 361.2 L49.2 362.4 V345 Z"/>
<!-- rect -->
<rect x="47.4" y="379.2" width="25" height="15.2"/>
<!-- arc3 -->
<path d="M47.8 435 Q51 420 70 412.6"/>
<!-- circle -->
<circle cx="59.9" cy="463" r="14.6"/>
<path d="M61.6 461.2 L66 457"/>
<!-- spline -->
<path d="M47.6 493.4 C49.6 502 53 505.4 56.4 502.4 C59.6 499.6 61.6 496 64.6 497.2 C68 498.4 71.6 503 72.6 507.6"/>
<!-- ellipse -->
<ellipse cx="59.9" cy="539.8" rx="12.6" ry="9.6"/>
<!-- ell arc -->
<path d="M49 571.6 C52 567 58 566 63 566.4 C70 567 74.8 571 74.8 576.4 C74.8 581 70.4 584.6 64.6 586"/>
<!-- block insert -->
<rect x="47.4" y="647.4" width="15.4" height="9.4"/>
<circle cx="62.6" cy="658.7" r="8.4"/>
<!-- block create -->
<rect x="48.8" y="684.6" width="16.4" height="10.4"/>
<circle cx="65.4" cy="696.4" r="9.3"/>
<!-- image -->
<rect x="45.8" y="755.6" width="28.6" height="25.6" rx="2.6" stroke-width="1.4"/>
</g>
<g fill="#666">
  <path d="M45.2 250 L47.4 242.4 L53 248 Z M75 220 L72.8 227.6 L67.2 222 Z"/>
  <path d="M68.4 454.6 L66.8 459 L64 456.2 Z" fill="#2e2e2e"/>
  <circle cx="69.1" cy="762.3" r="2.3"/>
  <path d="M48.9 778.3 L54.4 766.4 L61.7 773.5 L63.3 771.4 L71.3 778.3 Z"/>
  <path d="M74.8 661.2 V667.6 H68.4 Z" fill="#000"/>
</g>
<path fill-rule="evenodd" d="M6.9 198.4 L12.3 182.7 H15.9 L21.3 198.4 H18.2 L17 194.6 H11.2 L10 198.4 Z M12 192.2 H16.2 L14.1 185.8 Z" fill="#666"/>
<path fill-rule="evenodd" d="M47.8 743.9 L58 714.3 H63 L73.2 743.9 H68.3 L65.5 735.3 H55.5 L52.7 743.9 Z M56.7 731.6 H64.3 L60.5 720 Z" fill="#666"/>
<!-- hatch fill -->
<rect x="12.2" y="224.9" width="19.6" height="19.6" fill="#f2eee9"/>
<path d="M13.4 233.6 L20.6 226.4 M13.4 239 L26 226.4 M13.6 243.8 L30.8 226.6 M21.4 242 L28.6 234.8" stroke="#5b93c9" stroke-width="1.4" fill="none"/>
<path d="M19.4 249.6 L37 232" stroke="#2e2e2e" stroke-width="1.3"/>
<!-- doc for block insert -->
<!-- clip -->
<path d="M49.2 759 V761 Q49.2 763.2 51.6 763.2 Q54 763.2 54 761 V755.4 Q54 753.6 52.4 753.6 H50.6 Q49 753.6 49 755.4" fill="none" stroke="#4f8ec8" stroke-width="1.1"/>
<!-- plus -->
<path d="M68.5 675.8 V685.4 M63.6 680.6 H73.4" stroke="#4f8ec8" stroke-width="1.2" fill="none"/>
<!-- blue squares -->
<g fill="#4f8ec8">
  <rect x="69.3" y="181.8" width="5.8" height="5.6"/><rect x="45" y="206.6" width="5.7" height="5.4"/>
  <rect x="57" y="232.5" width="6" height="5.6"/>
  <rect x="61.5" y="262.2" width="4.1" height="3.9"/><rect x="45.2" y="280.3" width="4.1" height="3.8"/><rect x="61.5" y="280.3" width="4.1" height="3.8"/>
  <rect x="56.9" y="308.8" width="5.7" height="5.2"/><rect x="47.7" y="320.7" width="5.5" height="5.1"/>
  <rect x="65.1" y="358.8" width="5.1" height="4.9"/>
  <rect x="69.7" y="377.2" width="5.1" height="4.8"/><rect x="45.2" y="392.1" width="5" height="4.7"/>
  <rect x="69.7" y="410.1" width="5.1" height="5.1"/><rect x="53.2" y="418.2" width="5.2" height="5.2"/><rect x="45.2" y="434.5" width="5.2" height="5.2"/>
  <rect x="57.1" y="460.5" width="5.5" height="5.2"/>
  <rect x="45.2" y="486.3" width="5.1" height="5"/><rect x="69.7" y="510.6" width="5.1" height="5.1"/>
  <rect x="57.1" y="529.3" width="5.5" height="4.8"/><rect x="45.2" y="537.6" width="5.1" height="5"/><rect x="69.7" y="537.6" width="5.1" height="5"/>
  <rect x="45.2" y="573.4" width="5.6" height="5.7"/><rect x="58.2" y="583" width="6" height="5.6"/>
  <rect x="55.9" y="612.2" width="8.1" height="7.6"/>
  <rect x="45.2" y="654.5" width="5.2" height="5.3"/>
  <rect x="46.1" y="692.2" width="5.7" height="5.5"/>
</g>
</svg>
<!-- right toolbar icons (page coords) -->
<svg style="left:1029px;top:170px" width="86" height="620" viewBox="1029 170 86 620">
<path d="M1035.3 370.5 H1064.9 M1035.3 414.5 H1064.9" stroke="#b9b9b9" stroke-width="1" fill="none"/>
<g fill="none" stroke="#2e2e2e" stroke-width="1.4">
  <!-- dim linear -->
  <path d="M1035.4 182.2 V211.8 M1064.4 182.2 V211.8" stroke-width="1.5"/>
  <!-- dim aligned -->
  <path d="M1035.3 231.3 L1046.5 220.2 M1053.4 249.5 L1064.7 238.4"/>
  <!-- radius / diameter -->
  <circle cx="1050" cy="273" r="14.6"/>
  <circle cx="1050" cy="310.9" r="14.6"/>
  <!-- angular -->
  <path d="M1035.3 357 L1054.9 337.4 M1035.3 361.6 H1064.9"/>
  <!-- oblique -->
  <path d="M1035.3 404.6 L1041.4 382.2 M1058.4 404.6 L1064.7 382.2"/>
  <!-- rotate arc -->
  <path d="M1099 299 A13.6 13.6 0 1 0 1103.9 320.8"/>
  <!-- scale -->
  <path d="M1079.7 344.8 V334.5 H1108.4 V362.8 H1097.5" stroke-width="1.5"/>
  <!-- offset outer -->
  <path d="M1108.8 381.2 H1099.8 V374.8 H1086.7 V381.2 H1085 Q1079.5 381.2 1079.5 386.7 V394 Q1079.5 399.3 1085 399.3 H1108.8" stroke="#444" stroke-width="1.3"/>
  <path d="M1108.8 385.8 H1096.5 V378.6 H1090.8 V385.8 H1087.6 Q1084.2 385.8 1084.2 389.2 V392 Q1084.2 395.3 1087.6 395.3 H1108.8" stroke="#9db5cc" stroke-width="1.1"/>
  <!-- array -->
  <rect x="1079.8" y="410.8" width="12.6" height="12.4"/><rect x="1095.7" y="410.8" width="12.6" height="12.4"/><rect x="1095.7" y="426.8" width="12.6" height="12.4"/>
  <rect x="1079.8" y="426.8" width="12.6" height="12.4" stroke="#5b93c9"/>
  <!-- mirror -->
  <path d="M1080.4 476.8 H1091.8 V451 Z" stroke="#1a1a1a"/>
  <!-- break curve -->
  <path d="M1079.6 507.6 C1080 496 1084 492.6 1087 493.4 C1092 494.6 1094 505.6 1100 506 C1104 506.4 1107 502.6 1108.8 498.2" stroke="#1a1a1a" stroke-dasharray="4.2 1.3"/>
  <!-- chamfer -->
  <path d="M1103.5 524.6 H1108.4 V553.2 H1079.5 V548.1" stroke="#1a1a1a"/>
  <path d="M1079.5 547 V524.6 H1102.6" stroke="#1a1a1a" stroke-dasharray="2.2 2.4"/>
  <path d="M1079.5 548.1 L1103.5 524.6" stroke="#5b93c9" stroke-width="1.2"/>
  <!-- fillet -->
  <path d="M1102.6 562.5 H1108.4 V591.3 H1079.5 V586.8" stroke="#1a1a1a"/>
  <path d="M1079.5 585.6 V562.5 H1100" stroke="#1a1a1a" stroke-dasharray="2.2 2.4"/>
  <path d="M1079.5 586.8 Q1080.5 564 1102.6 562.5" stroke="#5b93c9" stroke-width="1.3"/>
  <!-- trim -->
  <path d="M1085.6 626.5 L1092.4 602.2 M1079.1 614.4 H1085.1" stroke="#1a1a1a" stroke-width="1.6"/>
  <path d="M1092.3 614.4 H1098.4 M1102.6 614.4 H1108.8" stroke="#5b93c9" stroke-width="1.6"/>
  <!-- extend -->
  <path d="M1102.1 664.7 L1108.5 641.1 M1079.1 657.8 H1085.1" stroke="#1a1a1a" stroke-width="1.6"/>
  <path d="M1088.3 657.8 H1092.9 M1095.7 657.8 H1100.7" stroke="#5b93c9" stroke-width="1.6"/>
  <path d="M1081 649.8 H1093" stroke="#555" stroke-width="1.6"/>
  <!-- break at point -->
  <path d="M1085.3 720 H1081.6 Q1080.1 720 1080.1 721.5 V738.3 Q1080.1 739.8 1081.6 739.8 H1106.4 Q1107.9 739.8 1107.9 738.3 V721.5 Q1107.9 720 1106.4 720 H1103"/>
  <!-- join -->
  <path d="M1079.1 767.1 H1088 M1100 767.1 H1108.8" stroke="#1a1a1a" stroke-width="1.7"/>
</g>
<g fill="#4f8ec8">
  <!-- dim linear arrow -->
  <path d="M1037.1 191.1 L1044.5 186.8 V190.45 H1055.8 V186.8 L1063.2 191.1 L1055.8 195.4 V191.75 H1044.5 V195.4 Z"/>
  <!-- dim aligned arrow -->
  <path d="M1041 226.7 L1049.2 228.4 L1046.9 230.7 L1054.8 238.6 L1056.8 236.4 L1058.4 243.5 L1050.2 241.8 L1052.5 239.5 L1044.6 231.6 L1042.6 233.8 Z"/>
  <!-- radius arrow -->
  <path d="M1040.2 263.3 L1048.6 265.4 L1046.2 267.8 L1051.2 272.8 L1050 274 L1045 269 L1042.5 271.6 Z"/>
  <!-- diameter arrow -->
  <path d="M1040.2 301.6 L1048.6 303.6 L1046.2 306 L1055.4 315.2 L1057.8 312.6 L1059.5 320.8 L1051.2 318.8 L1053.6 316.4 L1044.4 307.2 L1042 309.8 Z"/>
  <!-- angular arrow -->
  <path d="M1053 342 L1058.6 344.6 L1056.6 346 Q1058.8 350 1059 354.6 L1061.8 354.6 L1058.4 360.6 L1054.8 354.6 L1057.6 354.6 Q1057.4 350.4 1055.4 346.8 L1053.4 348.2 Z"/>
  <!-- oblique arrow -->
  <path d="M1040.5 390.3 L1046.4 386.8 V389.6 H1055.3 V386.8 L1061.2 390.3 L1055.3 393.8 V391 H1046.4 V393.8 Z"/>
  <!-- copy circles -->
  <circle cx="1093.8" cy="242.6" r="6.4"/>
  <path d="M1099.04 237.1 A6.4 6.4 0 1 1 1099.04 248.1 A7.6 7.6 0 0 0 1099.04 237.1 Z"/>
  <!-- mirror -->
  <path d="M1095.4 448 V477.8 H1108.8 Z"/>
  <!-- cube right -->
  <path d="M1099.1 688.9 L1108.8 681.1 V698 L1099.1 705.7 Z"/>
  <!-- break squares -->
  <rect x="1085.3" y="717.3" width="4.6" height="4.6"/><rect x="1098.1" y="717.3" width="4.9" height="4.6"/>
  <!-- join -->
  <path d="M1087.1 761.4 V772.8 L1092.9 767.1 Z M1100.7 761.4 V772.8 L1095 767.1 Z"/>
</g>
<g fill="#666">
  <!-- copy -->
  <circle cx="1085.1" cy="227" r="6.2"/>
  <path d="M1097.5 231 H1105.7 L1101.6 235.4 Z"/>
  <!-- move -->
  <path d="M1093.8 258.1 L1099.3 264 H1096.4 V270.4 H1102.9 V267.5 L1108.8 273 L1102.9 278.5 V275.6 H1096.4 V282 H1099.3 L1093.8 287.9 L1088.3 282 H1091.2 V275.6 H1084.9 V278.5 L1079.1 273 L1084.9 267.5 V270.4 H1091.2 V264 H1088.3 Z"/>
  <!-- rotate head -->
  <path d="M1104.4 296.6 Q1105.4 296 1105.6 297.2 L1107 307.4 Q1107 308.4 1106 308.2 L1095.8 306 Q1094.8 305.6 1095.6 304.8 Z"/>
  <!-- scale sq -->
  <rect x="1079.1" y="348.7" width="15.2" height="14.9" rx="1.4"/>
  <!-- extend arrow head -->
  <path d="M1096.2 649.8 L1091.4 646.8 V652.8 Z" fill="#555"/>
  <!-- cube -->
  <path d="M1080.5 685.5 L1089.2 677.2 H1107.2 L1097.5 685.5 Z"/>
  <rect x="1079.1" y="689.4" width="16.9" height="16.3"/>
</g>
<path d="M1091.4 225.6 H1099 Q1101.6 225.6 1101.6 228.2 V232" fill="none" stroke="#555" stroke-width="1.5"/>
<circle cx="1093.8" cy="273" r="1.9" fill="#f2f2f2" stroke="#666" stroke-width="0.7"/>
<!-- eraser -->
<path d="M1099.1 182.2 L1108.8 191.6 L1096.6 203 L1087.1 194.5 Z" fill="#fdc802"/>
<path d="M1087.1 194.5 L1096.6 203 L1094.3 206.3 L1084.6 196.6 Z" fill="#fff"/>
<path d="M1084.6 196.6 L1094.3 206.3 L1088.6 211.4 L1079.3 202.4 Z" fill="#ff4500"/>
<path d="M1079.1 211.3 H1108.8" stroke="#5b93c9" stroke-width="1.2"/>
<!-- draw order icons -->
<g>
  <rect x="1035" y="422.1" width="13.5" height="13" fill="#666"/>
  <rect x="1051.5" y="438.6" width="13.4" height="13.2" fill="#666"/>
  <rect x="1041.4" y="428.5" width="17.2" height="16.7" fill="#4f8ec8" stroke="#e8e8e8" stroke-width="0.8"/>

  <rect x="1041.4" y="466.7" width="17.2" height="16.4" fill="#4f8ec8"/>
  <rect x="1035" y="460.2" width="13.5" height="12.9" fill="#666" stroke="#e8e8e8" stroke-width="0.6"/>
  <rect x="1051.5" y="476.8" width="13.4" height="12.9" fill="#666" stroke="#e8e8e8" stroke-width="0.6"/>

  <rect x="1044.8" y="507.9" width="20.1" height="20" fill="#666"/>
  <rect x="1035" y="498" width="20.2" height="20.2" fill="#4f8ec8" stroke="#e8e8e8" stroke-width="0.8"/>

  <rect x="1035" y="536.1" width="20.2" height="19.9" fill="#4f8ec8"/>
  <rect x="1044" y="546" width="20.9" height="19.8" fill="#666" stroke="#e0dcd8" stroke-width="0.8"/>
</g>
</svg>
</body>
</html>
